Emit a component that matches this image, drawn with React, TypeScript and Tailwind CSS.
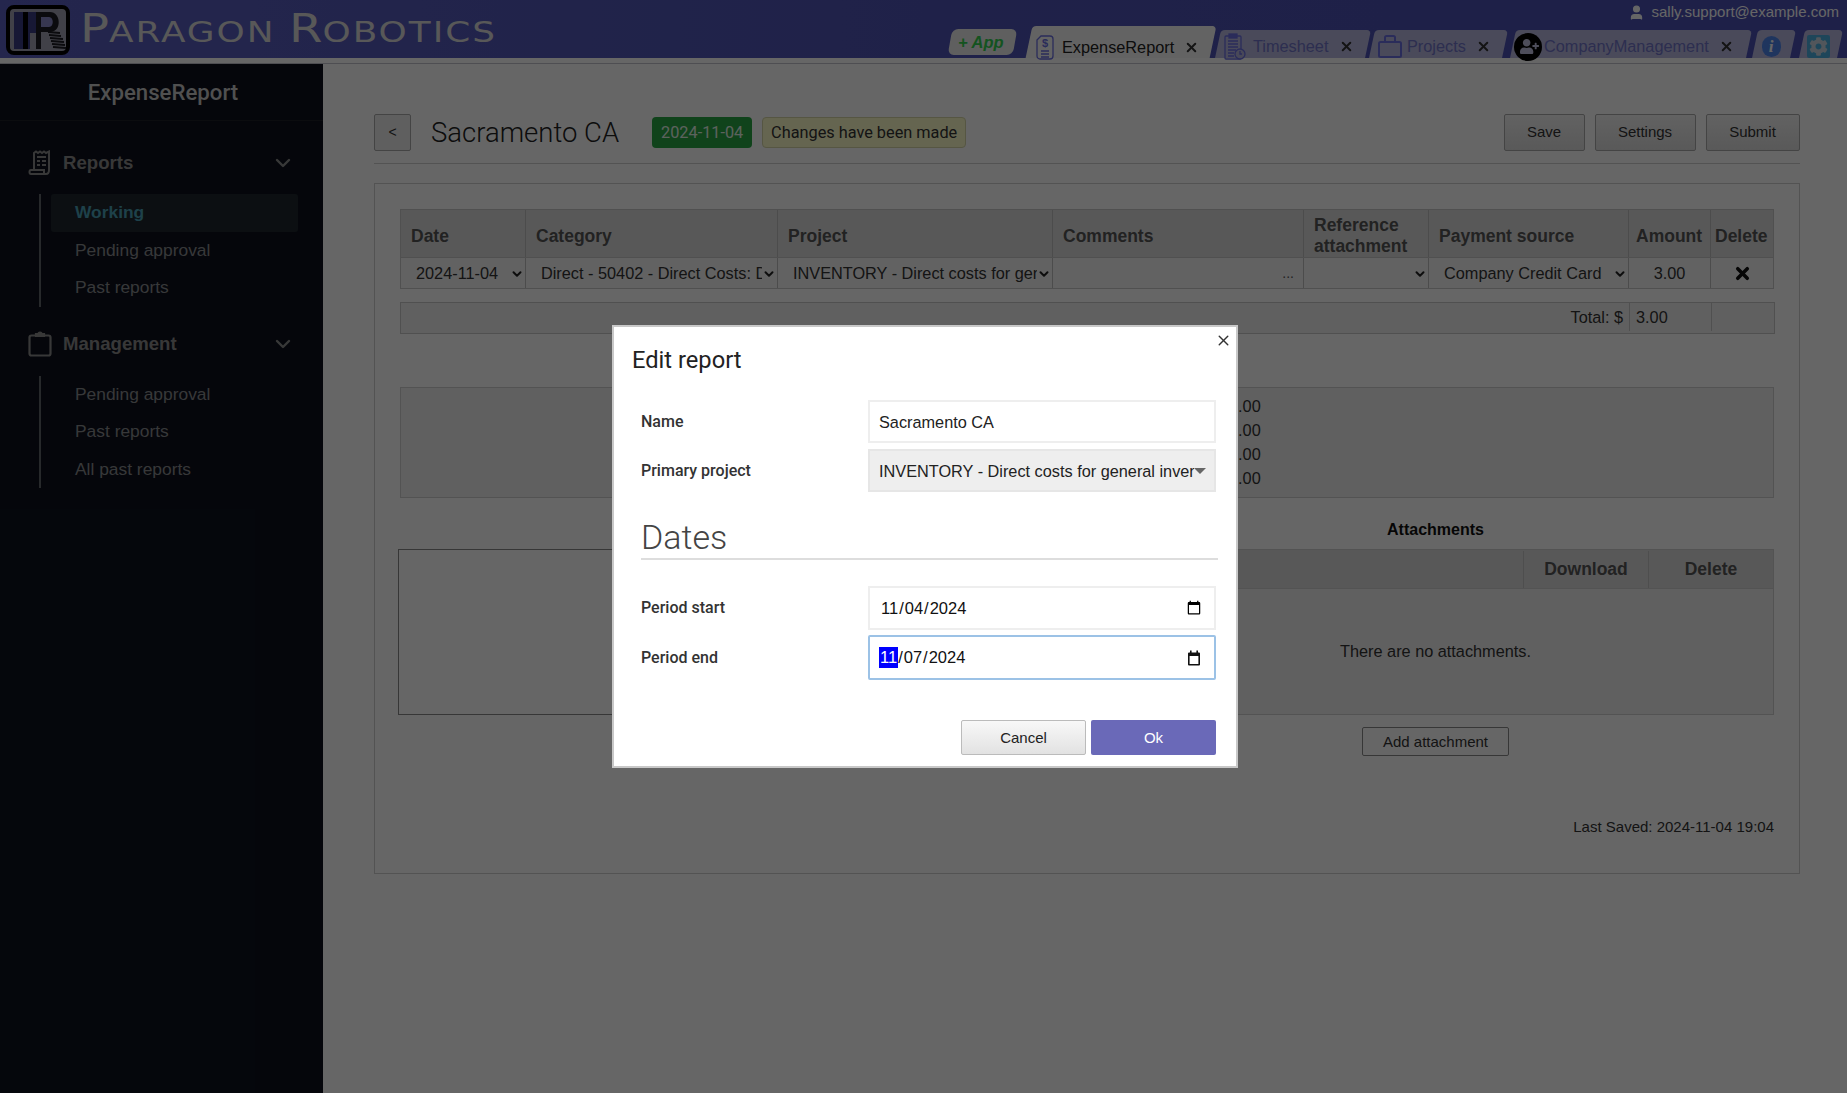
import React from "react";
import { ChevronDown, X, User } from "lucide-react";
import { FaCog, FaUserPlus } from "react-icons/fa";

const roboto = "font-['Roboto',sans-serif]";

function Logo() {
  return (
    <svg width="64" height="50" viewBox="0 0 64 50" className="shrink-0">
      <rect x="2" y="2" width="60" height="46" rx="6" fill="#a4a4b4" stroke="#000" strokeWidth="4" />
      <path d="M8 7h22c12 0 12 21 0 21H24v16H8z" fill="#3a3c86" />
      <rect x="17" y="7" width="5" height="37" fill="#000" />
      <path d="M30 7h14c11 0 12 19 1 20l1 0H35v17h-5z" fill="#1c1c24" />
      <path d="M35 12h8c5 0 5 10 0 10h-8z" fill="#8a8ac8" />
      <path d="M42 27l12 1M43 30l12 1M44 33l13 1M45 36l13 1M46 39l13 1M47 42l13 1" stroke="#1c1c24" strokeWidth="2" />
    </svg>
  );
}

function DollarDoc() {
  return (
    <svg width="18" height="25" viewBox="0 0 18 25" fill="none" stroke="#6a6ee0" strokeWidth="1.3">
      <path d="M1 5l4-4h9a3 3 0 0 1 3 3v17a3 3 0 0 1-3 3H4a3 3 0 0 1-3-3z" />
      <path d="M5 16h8M5 19h8M5 22h8" />
      <text x="9" y="12" fontSize="11" fontWeight="700" textAnchor="middle" fill="#6a6ee0" stroke="none" fontFamily="Liberation Sans">$</text>
    </svg>
  );
}

function TimesheetIcon() {
  return (
    <svg width="22" height="27" viewBox="0 0 22 27" fill="none" stroke="#6a6ee0" strokeWidth="1.3">
      <rect x="1" y="3" width="16" height="23" rx="1" />
      <rect x="5" y="1" width="8" height="4" fill="#6a6ee0" />
      <path d="M4 8h10M4 11h10M4 14h10M4 17h8M4 20h6M4 23h6" />
      <circle cx="16" cy="21" r="5" fill="#b4b4dc" />
      <path d="M16 18v3h2" />
    </svg>
  );
}

function BriefcaseIcon() {
  return (
    <svg width="24" height="23" viewBox="0 0 24 23" fill="none" stroke="#6a6ee0" strokeWidth="2">
      <rect x="1" y="7" width="22" height="15" rx="1.5" />
      <path d="M7 7V2.5A1.5 1.5 0 0 1 8.5 1h7A1.5 1.5 0 0 1 17 2.5V7" />
    </svg>
  );
}

function ReportsIcon() {
  return (
    <svg width="24" height="26" viewBox="0 0 24 26" fill="none" stroke="#8d8d8d" strokeWidth="2">
      <path d="M6 20V3l2-1.5 2 1.5 2-1.5 2 1.5 2-1.5 2 1.5 3-1.5V20c0 2-1 4-3 4H3c-2 0-2-4 0-4h13v4" />
      <path d="M9 7h9M9 11h3M14 11h4M9 15h3M14 15h4" />
    </svg>
  );
}

function ManagementIcon() {
  return (
    <svg width="24" height="26" viewBox="0 0 24 26" fill="none" stroke="#8d8d8d" strokeWidth="2.2">
      <rect x="1.5" y="4.5" width="21" height="20" rx="2" />
      <path d="M8 5V3h2.5a1.5 1.5 0 0 1 3 0H16v2z" fill="#8d8d8d" />
    </svg>
  );
}

function CalendarIcon() {
  return (
    <svg width="14" height="16" viewBox="0 0 14 16" className="ml-auto shrink-0">
      <rect x="3" y="0.5" width="1.6" height="2.5" fill="#111" />
      <rect x="9.4" y="0.5" width="1.6" height="2.5" fill="#111" />
      <path d="M1 3.5a1 1 0 0 1 1-1h10a1 1 0 0 1 1 1v11a1 1 0 0 1-1 1H2a1 1 0 0 1-1-1z" fill="#111" />
      <rect x="2.6" y="6" width="8.8" height="8" fill="#fff" />
    </svg>
  );
}

function HeaderTab(props: { active?: boolean; icon?: React.ReactNode; label?: string; className: string; close?: boolean; inner?: string; textGap?: string }) {
  return (
    <div className={`relative flex h-full items-center ${props.className}`}>
      <div className={`absolute inset-0 -skew-x-[12deg] rounded-t-[4px] ${props.active ? "bg-[#f8f8f8]" : "bg-[#b9b9e0]"}`} />
      <div className={`relative flex w-full items-center ${props.active ? "pt-[10px]" : "pt-[5px]"} ${props.inner || "pl-[6px] pr-[14px]"}`}>
        {props.icon}
        {props.label && (
          <span className={`${props.textGap || "ml-[5px]"} text-[16.3px] ${props.active ? "text-[#222]" : "text-[#7074c8]"}`}>{props.label}</span>
        )}
        {props.close && <X className="ml-auto text-[#333]" size={15} strokeWidth={3.2} />}
      </div>
    </div>
  );
}

function Header() {
  return (
    <header className="flex h-[58px] bg-gradient-to-r from-[#5a5fc0] via-[#4f54b6] to-[#4b50b4] font-['Liberation_Sans',sans-serif]">
      <div className="flex items-center pl-[6px] pt-[1px]">
        <Logo />
        <div className="ml-[10px] flex origin-left scale-x-[1.235] items-baseline whitespace-nowrap font-['DejaVu_Sans',sans-serif] font-normal text-[#dcdcdc]">
          <span className="text-[39px]">P</span>
          <span className="text-[29px] tracking-[1.6px]">ARAGON</span>
          <span className="ml-[11px] text-[39px]">R</span>
          <span className="text-[29px] tracking-[1.6px]">OBOTICS</span>
        </div>
      </div>
      <div className="ml-auto flex w-[897px] flex-col">
        <div className="flex h-[25px] items-center justify-end pr-[8px] text-[15px] text-white">
          <User size={17} fill="#fff" className="mr-[6px]" />
          <span>sally.support@example.com</span>
        </div>
        <div className="flex h-[33px] items-end">
          <div className="mb-[3px] flex h-[26px] w-[65px] -skew-x-[10deg] items-center justify-center rounded-[6px] bg-[#eeeeee] pr-[4px]">
            <span className="skew-x-[10deg] text-[16.5px] font-bold italic text-[#32d050]">+ App</span>
          </div>
          <HeaderTab active close icon={<DollarDoc />} label="ExpenseReport" textGap="ml-[8px]" inner="pl-[7px] pr-[14px]" className="ml-[14px] !h-[32px] w-[184px]" />
          <div className="ml-[5px] flex h-[28px]">
            <HeaderTab close icon={<TimesheetIcon />} label="Timesheet" textGap="ml-[7px]" className="w-[150px]" />
            <HeaderTab close icon={<BriefcaseIcon />} label="Projects" className="ml-[4px] w-[133px]" />
            <HeaderTab
              close
              inner="pl-[1px] pr-[15px]"
              textGap="ml-[2px]"
              icon={
                <span className="flex h-[28px] w-[28px] items-center justify-center rounded-full bg-black">
                  <FaUserPlus size={19} color="#c4c4e4" className="ml-[2px]" />
                </span>
              }
              label="CompanyManagement"
              className="ml-[8px] w-[236px]"
            />
            <HeaderTab
              inner="justify-center pr-[6px]"
              icon={<span className="flex h-[21px] w-[19px] items-center justify-center rounded-full bg-[#4f86ec] font-['Liberation_Serif',serif] text-[17px] font-bold italic text-white">i</span>}
              className="ml-[6px] w-[38px]"
            />
            <HeaderTab
              inner="justify-center pr-[6px]"
              icon={<span className="flex h-[23px] w-[23px] items-center justify-center rounded-[2px] bg-[#4cb0e0]"><FaCog size={19} color="#ccd8e4" /></span>}
              className="ml-[9px] w-[38px]"
            />
          </div>
        </div>
      </div>
    </header>
  );
}

function NavItem(props: { label: string; active?: boolean }) {
  return (
    <div className={`flex h-[37.5px] items-center rounded-[3px] pb-[1px] pl-[24px] text-[17.4px] ${props.active ? "bg-[#1e272e] font-bold text-[#4ba3b8]" : "text-[#8a8c90]"}`}>
      {props.label}
    </div>
  );
}

function NavGroup(props: { title: string; icon: React.ReactNode; items: { label: string; active?: boolean }[]; listClass: string }) {
  return (
    <div>
      <div className="flex h-[38px] items-center pl-[28px] pr-[28px]">
        <span className="flex w-[35px]">{props.icon}</span>
        <span className="text-[18.6px] font-bold text-[#8d8d8d]">{props.title}</span>
        <ChevronDown className="ml-auto text-[#8d8d8d]" size={24} strokeWidth={2.4} />
      </div>
      <div className={`ml-[39px] mr-[25px] border-l-[2px] border-[#63666c] pl-[10px] ${props.listClass}`}>
        {props.items.map((item, i) => (
          <NavItem key={i} label={item.label} active={item.active} />
        ))}
      </div>
    </div>
  );
}

function Sidebar() {
  return (
    <aside className="w-[323px] shrink-0 bg-[#0d111d] font-['Liberation_Sans',sans-serif]">
      <div className={`flex h-[57px] items-center justify-center border-b border-[#1c2026] pl-[3px] pt-[1px] text-[22.2px] font-medium text-[#c8c8c8] ${roboto}`}>
        ExpenseReport
      </div>
      <div className="mt-[23px]">
        <NavGroup
          title="Reports"
          icon={<ReportsIcon />}
          listClass="mt-[12px]"
          items={[{ label: "Working", active: true }, { label: "Pending approval" }, { label: "Past reports" }]}
        />
        <div className="mt-[18px]">
          <NavGroup
            title="Management"
            icon={<ManagementIcon />}
            listClass="mt-[13px]"
            items={[{ label: "Pending approval" }, { label: "Past reports" }, { label: "All past reports" }]}
          />
        </div>
      </div>
    </aside>
  );
}

function TH(props: { children: React.ReactNode; className?: string }) {
  return (
    <div className={`flex items-center pt-[5px] text-[17.5px] font-bold leading-[21px] text-[#555] ${props.className || "border-r border-[#bdbdbd] pl-[10px]"}`}>
      {props.children}
    </div>
  );
}

function RowSelect(props: { value: string }) {
  return (
    <div className="relative border-r border-[#bdbdbd]">
      <select defaultValue={props.value} className="h-full w-full appearance-none pl-[15px] pr-[15px] pt-[1px] text-[16.3px] text-[#333]">
        <option>{props.value}</option>
      </select>
      <ChevronDown size={14} strokeWidth={3.4} className="pointer-events-none absolute right-[1px] top-[9px] text-[#222]" />
    </div>
  );
}

function ExpenseTable() {
  const cols = "grid grid-cols-[125px_252px_275px_251px_125px_200px_82px_62px]";
  return (
    <div className="border border-[#c9c9c9] text-[16.3px]">
      <div className={`${cols} h-[48px] border-b border-[#c9c9c9] bg-[#dddddd]`}>
        <TH>Date</TH>
        <TH>Category</TH>
        <TH>Project</TH>
        <TH>Comments</TH>
        <TH>Reference attachment</TH>
        <TH>Payment source</TH>
        <TH className="border-r border-[#bdbdbd] pl-[7px]">Amount</TH>
        <TH className="pl-[4px]">Delete</TH>
      </div>
      <div className={`${cols} h-[30px] bg-[#f5f5f5]`}>
        <RowSelect value="2024-11-04" />
        <RowSelect value="Direct - 50402 - Direct Costs: Direct Materials" />
        <RowSelect value="INVENTORY - Direct costs for general inventory" />
        <div className="flex items-center justify-end border-r border-[#bdbdbd] pr-[9px] text-[14px] text-[#555]">...</div>
        <RowSelect value="" />
        <RowSelect value="Company Credit Card" />
        <div className="flex items-center justify-center border-r border-[#bdbdbd] text-[#333]">3.00</div>
        <div className="flex items-center justify-center">
          <X size={19} strokeWidth={4.5} className="text-[#111]" />
        </div>
      </div>
    </div>
  );
}

function Main() {
  return (
    <main className="flex-1 pl-[51px] pr-[47.5px] pt-[50px] font-['Liberation_Sans',sans-serif] text-[#333]">
      <div className="flex h-[37px] items-center">
        <button className="flex h-[37px] w-[37px] items-center justify-center rounded-[2px] border border-[#aaa] bg-[#eee] text-[14px]">&lt;</button>
        <h1 className={`ml-[20px] text-[27.5px] font-light text-[#222] ${roboto}`}>Sacramento CA</h1>
        <span className={`ml-[33px] flex h-[31px] w-[100px] items-center justify-center rounded-[4px] bg-[#28a745] pt-[1px] text-[16.3px] text-[#e6f5e9] ${roboto}`}>2024-11-04</span>
        <span className={`ml-[10px] flex h-[31px] w-[204px] items-center justify-center rounded-[4px] border border-[#d6d6a8] bg-[#fcfcc8] pt-[1px] text-[16.3px] text-[#333] ${roboto}`}>Changes have been made</span>
        <div className="ml-auto flex gap-[10px]">
          {[["Save", "w-[81px]"], ["Settings", "w-[101px]"], ["Submit", "w-[94px]"]].map(([t, w]) => (
            <button key={t} className={`h-[37px] ${w} rounded-[2px] border border-[#aaa] bg-gradient-to-b from-[#f5f5f5] to-[#dfdfdf] text-[15px] text-[#333]`}>{t}</button>
          ))}
        </div>
      </div>
      <div className="mt-[12px] border-t border-[#cfcfcf]" />
      <section className="mt-[19px] h-[691px] border border-[#cfcfcf] pl-[25px] pr-[24.5px] pt-[25px]">
        <ExpenseTable />
        <div className="mt-[13px] mr-[-1px] grid h-[32px] grid-cols-[1fr_82px_62px] border border-[#c9c9c9] bg-[#f0f0f0] pb-[2px] text-[16.3px]">
          <div className="flex items-center justify-end border-r border-[#c9c9c9] pr-[6px]">Total: $</div>
          <div className="flex items-center border-r border-[#c9c9c9] pl-[6px]">3.00</div>
          <div />
        </div>
        <div className="mt-[53px] flex h-[111px] flex-col justify-center border border-[#cfcfcf] bg-[#f0f0f0] pb-[2px] pl-[828px] text-[16.3px] leading-[24px]">
          <div>0.00</div>
          <div>0.00</div>
          <div>0.00</div>
          <div>0.00</div>
        </div>
        <div className="mt-[22px] -ml-[2px] flex">
          <div className="mt-[29px] h-[166px] w-[690px] border border-[#8a8a8a]" />
          <div className="ml-[9px] flex-1">
            <div className="h-[29px] text-center text-[16px] font-bold leading-[20px] text-[#111]">Attachments</div>
            <div className="border border-[#cfcfcf] bg-[#f0f0f0]">
              <div className="grid h-[39px] grid-cols-[1fr_125px_125px] border-b border-[#cfcfcf] bg-[#dddddd] pt-[1px] text-[17.5px] font-bold text-[#555]">
                <div />
                <div className="flex items-center justify-center border-l border-[#c4c4c4]">Download</div>
                <div className="flex items-center justify-center border-l border-[#c4c4c4]">Delete</div>
              </div>
              <div className="flex h-[125px] items-center justify-center text-[16.3px]">There are no attachments.</div>
            </div>
            <div className="mt-[12px] flex justify-center">
              <button className="h-[29px] w-[147px] rounded-[2px] border border-[#8a8a8a] pt-[1px] text-[15px]">Add attachment</button>
            </div>
          </div>
        </div>
        <div className="mt-[61px] text-right text-[15px] leading-[20px] text-[#333]">Last Saved: 2024-11-04 19:04</div>
      </section>
    </main>
  );
}

function Field(props: { label: string; children: React.ReactNode }) {
  return (
    <div className="flex items-center">
      <label className={`w-[227px] shrink-0 text-[16px] font-medium text-[#333] ${roboto}`}>{props.label}</label>
      <div className="min-w-0 flex-1">{props.children}</div>
    </div>
  );
}

function EditDialog() {
  return (
    <div className="absolute left-[612px] top-[325px] h-[443px] w-[626px] border-2 border-[#c8c8c8] bg-white pl-[18px] pr-[20px] font-['Liberation_Sans',sans-serif]">
      <button className="absolute right-[4px] top-[5px] text-[#333]"><X size={17} strokeWidth={2} /></button>
      <h2 className={`pt-[18px] text-[23.7px] leading-[30px] text-[#222] ${roboto}`}>Edit report</h2>
      <div className="ml-[9px] mt-[25px]">
        <div className="flex flex-col gap-[6px]">
          <Field label="Name">
            <input defaultValue="Sacramento CA" className="h-[43px] w-full border-2 border-[#eee] px-[9px] pt-[1px] text-[16.3px] text-[#222] outline-none" />
          </Field>
          <Field label="Primary project">
            <div className="relative flex h-[43px] items-center overflow-hidden border-2 border-[#e6e6e6] bg-[#eeeeee] pl-[9px] pt-[1px] text-[16.3px] text-[#222]">
              <span className="whitespace-nowrap">INVENTORY - Direct costs for general inventory</span>
              <span className="absolute right-0 top-0 flex h-full w-[20px] items-center bg-[#eeeeee]">
                <span className="h-0 w-0 border-x-[6px] border-t-[6px] border-x-transparent border-t-[#666]" />
              </span>
            </div>
          </Field>
        </div>
        <h3 className={`-mr-[2px] mt-[25px] border-b-2 border-[#ddd] pb-[1px] text-[34px] font-light leading-[40px] text-[#444] ${roboto}`}>Dates</h3>
        <div className="mt-[26px] flex flex-col gap-[5px]">
          <Field label="Period start">
            <input type="date" defaultValue="2024-11-04" className="h-[44px] w-full border-2 border-[#eee] pl-[10px] pr-[10px] text-[16.5px] text-[#111] outline-none" />
          </Field>
          <Field label="Period end">
            <div className="flex h-[45px] w-full items-center rounded-[2px] border-2 border-[#9cc2e6] pl-[9px] pr-[13px] text-[16.5px] text-[#111]">
              <span className="flex h-[21px] items-center bg-[#0000ff] px-[1px] text-white">11</span>
              <span>/</span>
              <span className="px-[1px]">07</span>
              <span>/</span>
              <span className="px-[1px]">2024</span>
              <CalendarIcon />
            </div>
          </Field>
        </div>
        <div className="mt-[40px] flex justify-end gap-[5px]">
          <button className="h-[35px] w-[125px] rounded-[2px] border border-[#bbb] bg-gradient-to-b from-[#f8f8f8] to-[#e2e2e2] pt-[1px] text-[15px] text-[#222]">Cancel</button>
          <button className="h-[35px] w-[125px] rounded-[2px] bg-[#6a69b8] pt-[1px] text-[15px] text-white">Ok</button>
        </div>
      </div>
    </div>
  );
}

export default function App() {
  return (
    <div className="relative h-[1093px] overflow-hidden bg-white">
      <Header />
      <div className="h-[6px] border-b border-[#c4c4cc] bg-white" />
      <div className="flex h-[1029px]">
        <Sidebar />
        <Main />
      </div>
      <div className="absolute inset-0 bg-black/60" />
      <EditDialog />
    </div>
  );
}
